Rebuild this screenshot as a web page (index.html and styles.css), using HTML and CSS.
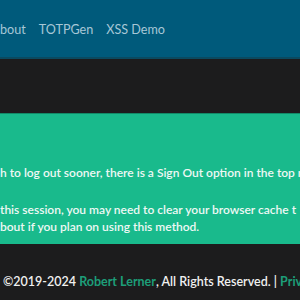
FILE: index.html
```html
<!DOCTYPE html>
<html>
<head>
<meta charset="utf-8">
<link rel="stylesheet" href="styles.css">
</head>
<body>
<nav class="navbar">
  <a class="nav-link" href="#">bout</a>
  <a class="nav-link" href="#">TOTPGen</a>
  <a class="nav-link" href="#">XSS Demo</a>
</nav>
<main class="content">
  <div class="alert">
    <p class="line first">h to log out sooner, there is a Sign Out option in the top m</p>
    <p class="line">this session, you may need to clear your browser cache t</p>
    <p class="line">bout if you plan on using this method.</p>
  </div>
</main>
<footer class="footer">
  <p>©2019-2024 <a href="#" class="green">Robert Lerner</a>, All Rights Reserved. | <a href="#" class="green">Privacy</a></p>
</footer>
</body>
</html>
```
FILE: styles.css
```css
html, body {
  margin: 0;
  padding: 0;
  background: #1c1c1d;
  font-family: Lato, "Open Sans", sans-serif;
  overflow: hidden;
  width: 300px;
  height: 300px;
}
.navbar {
  height: 57px;
  background: #005a7b;
  border-bottom: 2px solid #0a4a60;
  display: flex;
  align-items: center;
  gap: 13px;
  white-space: nowrap;
}
.nav-link {
  color: #a7c7d6;
  text-decoration: none;
  font-size: 12.6px;
  margin-top: 1px;
}
.content {
  padding-top: 54px;
}
.alert {
  background: #19ba8c;
  border-top: 1px solid #128a68;
  height: 131px;
  box-sizing: border-box;
  padding-top: 50px;
  color: #eef8f4;
  font-size: 12px;
  font-weight: 600;
  white-space: nowrap;
  overflow: hidden;
}
.line {
  margin: 0;
  line-height: 17px;
}
.line.first {
  margin-bottom: 20px;
}
.footer {
  padding-top: 30px;
  padding-left: 3px;
  color: #f0f0f0;
  font-size: 12.5px;
  font-weight: 600;
  white-space: nowrap;
}
.footer p {
  margin: 0;
}
.green {
  color: #1d9e79;
  text-decoration: none;
  font-weight: 700;
}
```
